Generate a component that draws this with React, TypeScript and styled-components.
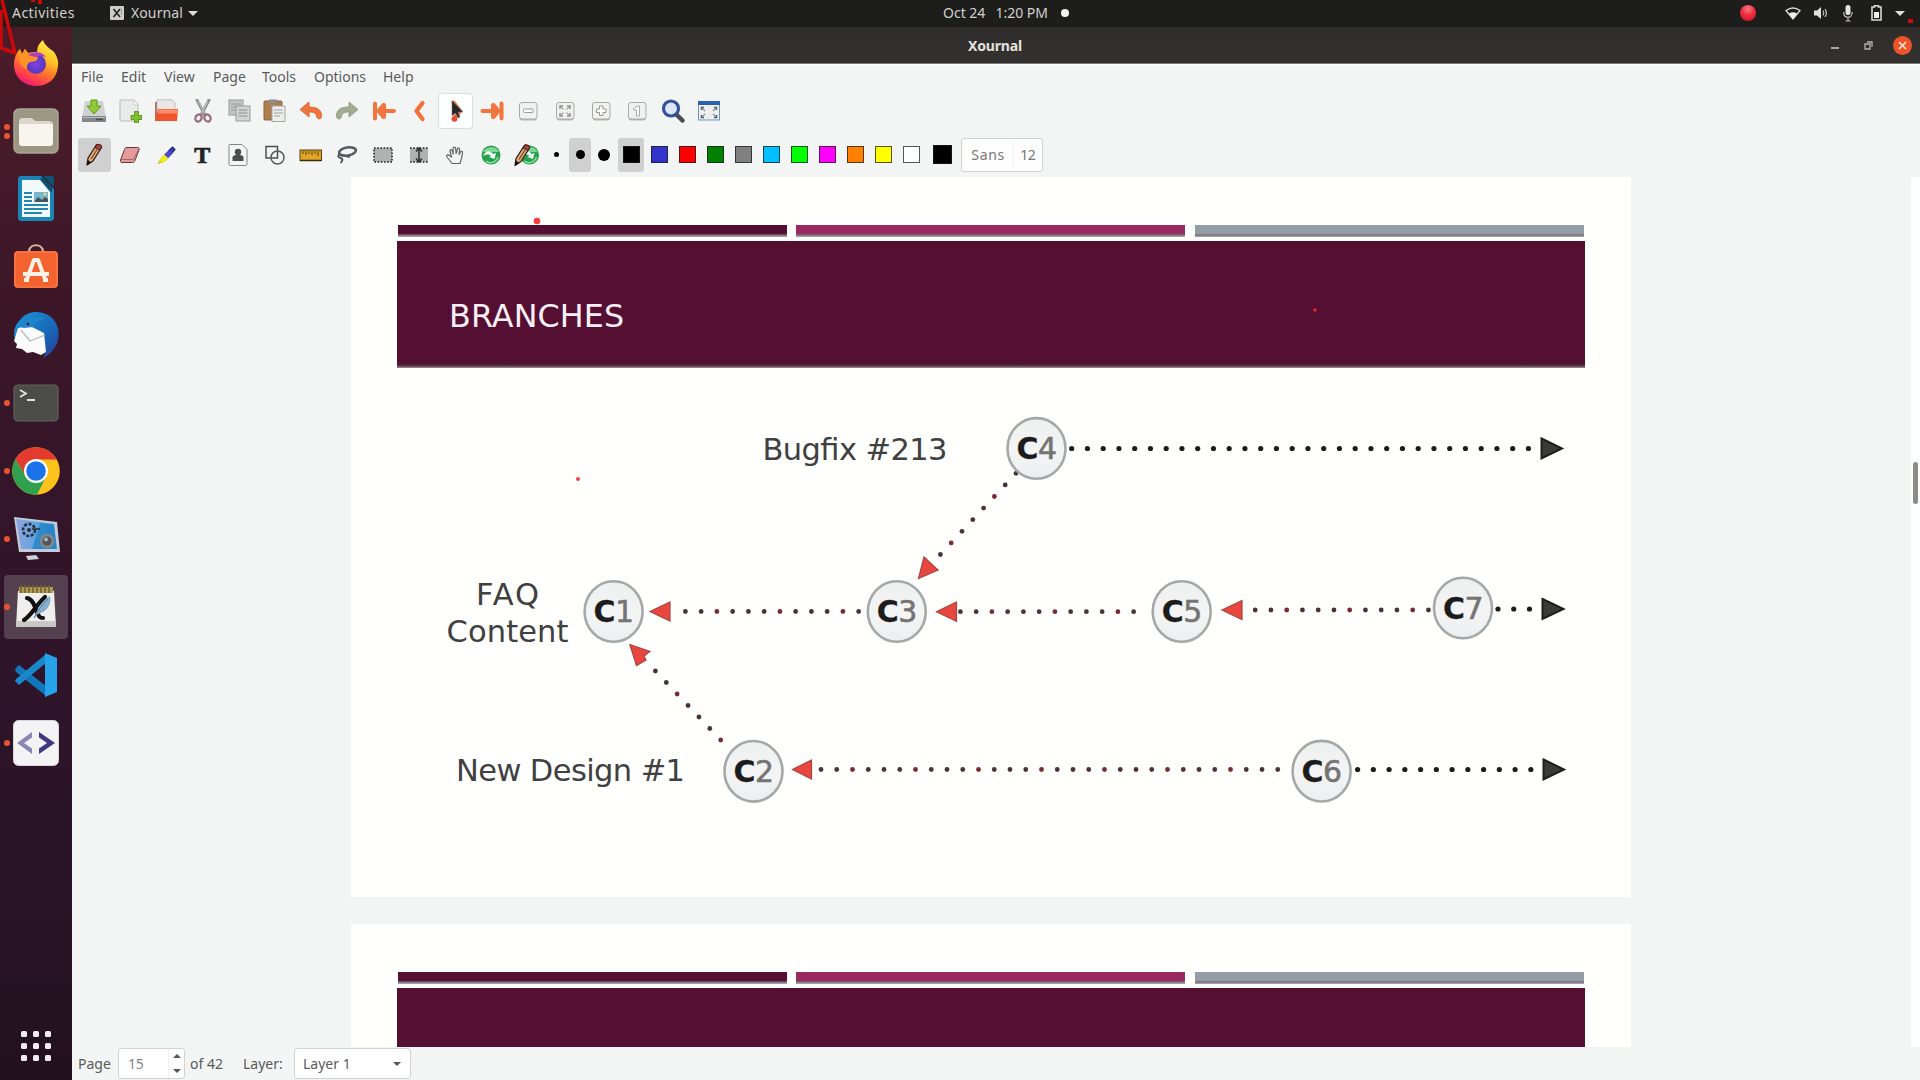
import React from 'react';
import styled, { createGlobalStyle, css } from 'styled-components';

const UI_FONT = '"Noto Sans", "Open Sans", sans-serif';
const SLIDE_FONT = '"DejaVu Sans", sans-serif';

const GlobalStyle = createGlobalStyle`
  * { box-sizing: border-box; }
  body { margin: 0; background: #f3f5f5; font-family: ${UI_FONT}; overflow: hidden; }
  svg { display: block; flex: none; }
`;

const Desktop = styled.div`
  position: relative;
  width: 1920px;
  height: 1080px;
  display: flex;
  flex-direction: column;
  overflow: hidden;
`;

const TopBar = styled.header`
  height: 27px;
  flex: none;
  display: grid;
  grid-template-columns: 700px 1fr 700px;
  align-items: center;
  background: #1d1d1b;
  color: #d2d0cd;
  font-size: 14px;
  line-height: 24px;
  padding-bottom: 1px;
`;

const TopLeft = styled.div`
  display: flex;
  align-items: center;
  padding-left: 12px;
`;

const Activities = styled.span`
  width: 98px;
  letter-spacing: 0.45px;
`;

const AppName = styled.span`
  margin-left: 7px;
  width: 57px;
  white-space: nowrap;
  letter-spacing: 0.1px;
`;

const CaretDown = styled.i<{ $size?: number; $color?: string }>`
  width: 0;
  height: 0;
  border: ${p => p.$size ?? 5}px solid transparent;
  border-top-color: ${p => p.$color ?? '#deddda'};
  border-bottom: 0;
`;

const CaretUp = styled(CaretDown)`
  border: 4px solid transparent;
  border-bottom-color: #555;
  border-top: 0;
`;

const Clock = styled.div`
  display: flex;
  align-items: center;
  padding-left: 243px;
  gap: 10px;
  white-space: nowrap;
  letter-spacing: 0;
`;

const NoticeDot = styled.i`
  width: 8px;
  height: 8px;
  border-radius: 50%;
  background: #f4f4f4;
  margin-left: 3px;
`;

const Tray = styled.div`
  display: flex;
  align-items: center;
  justify-content: flex-end;
  padding-right: 15px;
`;

const RecordLight = styled.i`
  width: 16px;
  height: 16px;
  border-radius: 50%;
  background: radial-gradient(circle at 50% 25%, #ff7a83, #ee2c40 45%, #c9122c);
  margin-right: 29px;
`;

const TraySlot = styled.div<{ $w: number }>`
  width: ${p => p.$w}px;
  display: flex;
`;

const Body = styled.div`
  flex: 1;
  display: flex;
  min-height: 0;
`;

const Dock = styled.nav`
  width: 72px;
  flex: none;
  display: flex;
  flex-direction: column;
  padding-top: 2px;
  background: linear-gradient(#4c1c2a 0, #451a29 12%, #3a1628 30%, #2f142a 60%, #2a1327 80%, #22121d 100%);
`;

const DockItem = styled.div<{ $active?: boolean }>`
  height: 64px;
  width: 64px;
  margin: 2px 4px;
  border-radius: 4px;
  display: grid;
  place-items: center;
  position: relative;
  ${p => p.$active && css`background: #54404f;`}
`;

const RunDots = styled.div`
  position: absolute;
  left: 0;
  top: 0;
  height: 100%;
  display: flex;
  flex-direction: column;
  justify-content: center;
  gap: 3px;
`;

const RunDot = styled.i`
  width: 6px;
  height: 6px;
  border-radius: 50%;
  background: #e95430;
`;

const AppGrid = styled.div`
  margin: auto 0 19px 21px;
  display: grid;
  grid-template-columns: repeat(3, 6px);
  grid-auto-rows: 6px;
  gap: 6px;
`;

const GridDot = styled.i`
  background: #f4eef4;
  border-radius: 1.5px;
`;

const Window = styled.main`
  flex: 1;
  min-width: 0;
  display: flex;
  flex-direction: column;
  background: #f3f5f5;
`;

const TitleBar = styled.div`
  height: 37px;
  flex: none;
  display: grid;
  grid-template-columns: 1fr auto 1fr;
  align-items: center;
  padding-right: 2px;
  background: linear-gradient(#2e2d2c, #32312f);
  border-bottom: 1px solid #7c7b7a;
  color: #e4e2df;
  font-size: 14px;
  font-weight: 700;
  letter-spacing: -0.15px;
`;

const WindowButtons = styled.div`
  grid-column: 3;
  display: flex;
  justify-content: flex-end;
  align-items: center;
  padding-right: 6px;
`;

const MinimizeMark = styled.i`
  width: 8px;
  height: 2px;
  background: #aaa8a6;
  margin: 5px 25px 0 0;
`;

const CloseButton = styled.div`
  width: 19px;
  height: 19px;
  border-radius: 50%;
  background: #ec5428;
  display: grid;
  place-items: center;
  margin-left: 20px;
`;

const MenuBar = styled.div`
  height: 26px;
  flex: none;
  display: flex;
  align-items: center;
  padding: 0 0 2px 9px;
  color: #5a5a5a;
  font-size: 14px;
  border-top: 2px solid #fdfdfd;
  border-bottom: 1px solid #f1f1ee;
`;

const MenuItem = styled.span<{ $w: number }>`
  width: ${p => p.$w}px;
  letter-spacing: 0;
`;

const ToolRow = styled.div<{ $h: number; $pitch: number }>`
  height: ${p => p.$h}px;
  flex: none;
  display: flex;
  align-items: center;
  padding-left: 4px;
  --pitch: ${p => p.$pitch}px;
`;

const ToolCell = styled.div`
  width: var(--pitch);
  flex: none;
  display: flex;
  justify-content: center;
`;

const ToolButton = styled.div<{ $state?: 'on' | 'hover'; $w?: number }>`
  width: ${p => p.$w ?? 33}px;
  height: 34px;
  flex: none;
  border-radius: 3px;
  display: grid;
  place-items: center;
  ${p => p.$state === 'on' && css`background: #d0d0d0;`}
  ${p => p.$state === 'hover' && css`background: #fff; box-shadow: 0 0 1px 1px #dcdcdc;`}
`;

const WidthCell = styled.div<{ $w: number }>`
  width: ${p => p.$w}px;
  flex: none;
  display: flex;
  justify-content: center;
`;

const SwatchStrip = styled.div`
  display: flex;
  align-items: center;
  padding-left: 1.4px;
`;

const PenDot = styled.i<{ $d: number }>`
  width: ${p => p.$d}px;
  height: ${p => p.$d}px;
  border-radius: 50%;
  background: #000;
`;

const Swatch = styled.i<{ $color: string; $size?: number }>`
  width: ${p => p.$size ?? 17}px;
  height: ${p => p.$size ?? 17}px;
  background: ${p => p.$color};
  border: 1.5px solid rgba(30, 30, 30, 0.75);
`;

const FontButton = styled.div`
  margin-left: 1px;
  width: 82px;
  height: 34px;
  border: 1px solid #d3d3d3;
  border-radius: 3px;
  background: #fdfdfd;
  display: flex;
  align-items: center;
  color: #777;
  font-size: 14px;
`;

const FontName = styled.span`
  width: 52px;
  height: 28px;
  line-height: 28px;
  padding-left: 9px;
  letter-spacing: 0.7px;
  border-right: 1px solid #f1f1ef;
`;

const FontSize = styled.span`
  padding-left: 6px;
  letter-spacing: -0.5px;
`;

const Workspace = styled.div`
  flex: 1;
  min-height: 0;
  display: flex;
  overflow: hidden;
`;

const Pages = styled.div`
  flex: 1;
  display: flex;
  flex-direction: column;
  gap: 27px;
  padding-left: 279px;
  overflow: hidden;
`;

const SlidePage = styled.section`
  width: 1280px;
  height: 720px;
  flex: none;
  background: #fffffe;
  padding: 48px 47px 0;
`;

const Stripes = styled.div`
  display: grid;
  grid-template-columns: repeat(3, 389px);
  justify-content: space-between;
  margin: 0 0 4px -0.5px;
`;

const Stripe = styled.div<{ $color: string }>`
  height: 12px;
  background: linear-gradient(${p => p.$color} 70%, #777077 84%, #b5afb3);
`;

const Banner = styled.div`
  margin: 0 -0.5px 0 -1px;
  height: 127px;
  background: linear-gradient(#540f32 93%, #4b1531 97%, #6b5461 99%, #a69aa2);
  color: #fbeff6;
  font: 31.8px/40px ${SLIDE_FONT};
  letter-spacing: 0.1px;
  padding: 55px 0 0 52px;
`;

const ScrollTrack = styled.div`
  width: 9px;
  background: #fff;
  padding: 285px 0 0 2px;
`;

const ScrollThumb = styled.div`
  width: 4.5px;
  height: 42px;
  border-radius: 3px;
  background: #8b8b89;
`;

const StatusBar = styled.footer`
  height: 33px;
  flex: none;
  display: flex;
  align-items: center;
  padding: 0 0 0 6px;
  color: #5a5a5a;
  font-size: 14px;
`;

const StatusLabel = styled.span<{ $w: number }>`
  width: ${p => p.$w}px;
  white-space: nowrap;
  letter-spacing: 0;
`;

const PageTotal = styled(StatusLabel)`
  padding-left: 5px;
`;

const Field = styled.div<{ $w: number }>`
  width: ${p => p.$w}px;
  height: 31px;
  border: 1px solid #d2d2d2;
  border-radius: 3px;
  background: #fff;
  display: flex;
  align-items: center;
`;

const PageNumber = styled.span`
  flex: 1;
  padding-left: 9px;
  color: #858585;
  letter-spacing: -0.3px;
`;

const Stepper = styled.div`
  width: 16px;
  height: 29px;
  border-left: 1px solid #f0f0f0;
  display: flex;
  flex-direction: column;
  align-items: center;
  justify-content: space-between;
  padding: 5px 0 5px;
`;

const LayerName = styled.span`
  width: 98px;
  padding-left: 8px;
`;

const InkOverlay = styled.svg`
  position: absolute;
  left: 0;
  top: 0;
  pointer-events: none;
`;

/* ---------- dock icons, 48 x 48 ---------- */

const dockSvg = (children: React.ReactNode) => (
  <svg width="48" height="48" viewBox="0 0 48 48">{children}</svg>
);

const Firefox = () => dockSvg(
  <>
    <defs>
      <linearGradient id="ff" x1="0.8" y1="0" x2="0.3" y2="1">
        <stop offset="0" stopColor="#fff44f" /><stop offset=".35" stopColor="#ffc327" />
        <stop offset=".6" stopColor="#ff7a2a" /><stop offset=".85" stopColor="#ff3750" /><stop offset="1" stopColor="#e31587" />
      </linearGradient>
      <radialGradient id="ffb"><stop offset="0" stopColor="#7a45e0" /><stop offset="1" stopColor="#5a35c0" /></radialGradient>
    </defs>
    <path d="M2 26C2 19 4 14 8 10l2 5 3-5 3 4c4-1 6-1 9-1 0-5 2-9 6-12 1 4 4 6 7 9l3 2c3 3 6 9 5 15-1 13-10 20-22 20S2 38 2 26z" fill="url(#ff)" />
    <circle cx="24" cy="25" r="10" fill="url(#ffb)" />
    <path d="M8 11l2 4 3-5 3 4 7 1 3 4-2 3-6 1c-3 2-3 3-3 7-5-1-8-7-8-11z" fill="#ff9328" />
    <path d="M16 16c5-4 14-4 18 2l-6-1-5 1z" fill="#b13cc4" />
  </>
);

const Files = () => dockSvg(
  <>
    <rect x="2" y="2" width="44" height="44" rx="5" fill="#9c9785" stroke="#aaa594" strokeWidth="1.5" />
    <path d="M7 15c0-3 1-4 4-4h8c2 0 3 3 5 3h13c2 0 4 1 4 4v17c0 3-1 4-4 4H11c-3 0-4-1-4-4z" fill="#dcd7cb" />
    <path d="M7 17h34v18c0 3-1 4-4 4H11c-3 0-4-1-4-4z" fill="#f8f5ef" />
  </>
);

const Writer = () => dockSvg(
  <>
    <path d="M9 1h20l13 13v28c0 3-1 4-4 4H10c-3 0-4-1-4-4V5c0-3 1-4 3-4z" fill="#1a85b6" />
    <path d="M31 1h8c2 0 3 1 3 3v8z" fill="#0d5578" />
    <path d="M10 5h18l10 12v25H10z" fill="#f3f9fb" />
    <path d="M28 4l12 14V12L31 2z" fill="#124c68" />
    <path d="M12 18h8M12 22h8M12 26h8M12 30h24M12 34h24M12 38h18" stroke="#2288ad" strokeWidth="2" />
    <rect x="22" y="17" width="14" height="10" fill="#77b7ce" />
    <path d="M22 27l4-5 4 3 3-3 3 2v3z" fill="#45535c" /><circle cx="33" cy="19" r="1.5" fill="#f0d36c" />
  </>
);

const Software = () => dockSvg(
  <>
    <path d="M17 9c0-9 14-9 14 0" fill="none" stroke="#ccb697" strokeWidth="2.2" />
    <rect x="2" y="8" width="44" height="37" rx="4" fill="#f4622f" />
    <rect x="3" y="9" width="42" height="35" rx="3" fill="none" stroke="#fa8150" />
    <path d="M15 36l7-19h4l7 19M11 31h26M12 37h5M31 37h5" fill="none" stroke="#fdf0e6" strokeWidth="4" strokeLinejoin="round" />
  </>
);

const Thunderbird = () => dockSvg(
  <>
    <defs>
      <linearGradient id="tb" x1="0" y1="0" x2="1" y2="1"><stop offset="0" stopColor="#1d96d8" /><stop offset=".6" stopColor="#1867b8" /><stop offset="1" stopColor="#2a3b96" /></linearGradient>
    </defs>
    <path d="M9 8C16-2 34-1 42 9c9 12 5 30-11 38 2-4 4-7 2-11L6 33C-1 25 2 14 9 8z" fill="url(#tb)" />
    <path d="M6 17l12-2 14 7 2 19-5 3-8-3-6 1-5-4-6-1 1-4-3-3z" fill="#fbfbfc" />
    <path d="M9 19l9 11 15-6" fill="none" stroke="#b3b9bf" strokeWidth="1.2" />
    <path d="M9 16c4-9 15-12 25-8-6 0-11 4-13 8l-9 1z" fill="#2186c9" />
    <circle cx="16" cy="13" r="1.3" fill="#123" />
  </>
);

const Terminal = () => dockSvg(
  <>
    <rect x="2" y="6" width="44" height="36" rx="4" fill="#4b4b48" stroke="#62625f" strokeWidth="1.2" />
    <path d="M8 11l6 3.5L8 18M15 21h8" fill="none" stroke="#e2e2df" strokeWidth="1.8" />
  </>
);

const Chrome = () => dockSvg(
  <>
    <circle cx="24" cy="24" r="23.800" fill="#fcc21b" />
    <path d="M14 30L3.400 12A24 24 0 0 1 45 12.5H24z" fill="#e33b2e" />
    <path d="M14 30L3.400 12A24 24 0 0 0 25 47.800L34 30z" fill="#2ea04e" />
    <circle cx="24" cy="24" r="12" fill="#fff" /><circle cx="24" cy="24" r="9.8" fill="#1a73e8" />
  </>
);

const Recorder = () => dockSvg(
  <>
    <defs><linearGradient id="rc" x1="0" y1="0" x2="1" y2="0"><stop offset="0" stopColor="#8ea5dd" /><stop offset=".5" stopColor="#5da5e0" /><stop offset="1" stopColor="#2d8ad0" /></linearGradient></defs>
    <path d="M2 2l43 5 3 30H7z" fill="#c3cbd8" />
    <path d="M4 4l38 5 3 25H9z" fill="url(#rc)" />
    <path d="M28 8l14 2 2 24H20z" fill="#1f7fc5" opacity=".7" />
    <circle cx="17" cy="15" r="6" fill="none" stroke="#27303a" strokeWidth="2.6" strokeDasharray="3 1.5" />
    <circle cx="17" cy="15" r="2" fill="#27303a" /><path d="M20 14h8" stroke="#27303a" strokeWidth="1.600" />
    <circle cx="35" cy="26" r="7.5" fill="#7e868e" /><circle cx="35" cy="26" r="4.5" fill="#4f565e" /><circle cx="34" cy="24.500" r="2" fill="#aab4bd" />
    <path d="M14 41l10-1 3 4-11 1z" fill="#cfd3d5" />
  </>
);

const Xournal = () => dockSvg(
  <>
    <path d="M6 8h36l2 36H4z" fill="#efeeec" />
    <path d="M5 38h38.500l.5 6H4z" fill="#c9c8c6" />
    <path d="M7 4h34v6H7z" fill="#af9850" />
    <path d="M9 2v8M13 2v8M17 2v8M21 2v8M25 2v8M29 2v8M33 2v8M37 2v8" stroke="#6f5f2d" strokeWidth="1.5" />
    <path d="M15 15c6 1 8 9 10 14s3 6 6 6M33 14C24 22 20 32 12 37" fill="none" stroke="#111" strokeWidth="4.2" strokeLinecap="round" />
    <path d="M38 13c2 8-3 16-12 18l-4 4c3-9 8-17 16-22z" fill="#86aecb" /><path d="M22 35c4-8 8-14 14-19" stroke="#4b7fa6" fill="none" />
  </>
);

const VSCode = () => dockSvg(
  <>
    <path d="M3 18l4-4 27 21v10L4 21z" fill="#1177bb" />
    <path d="M3 30l4 4 27-22V3L4 28z" fill="#1b88cc" />
    <path d="M33 2l12 5v34l-12 5V2z" fill="#27a3ec" />
  </>
);

const CodeApp = () => dockSvg(
  <>
    <rect x="1.500" y="1.500" width="45" height="45" rx="5" fill="#f3f3f5" stroke="#d6d6da" />
    <path d="M20 13v5.500L12 24l8 5.500V35L5 24z" fill="#8b87b5" />
    <path d="M27 13v5.500l8 5.500-8 5.500V35l16-11z" fill="#403b80" />
  </>
);

/* ---------- toolbar icons, 24 x 24 ---------- */

const tool = (children: React.ReactNode) => (
  <svg width="24" height="24" viewBox="0 0 24 24">{children}</svg>
);

const SaveIcon = () => tool(<>
  <path d="M3 2h18l3 16H0z" fill="#cfd1d2" /><path d="M0 17h24v6H0z" fill="#84888a" /><path d="M1 18h22v1H1z" fill="#b8bbbd" />
  <path d="M14 20.500h7" stroke="#444" strokeWidth="1.500" />
  <path d="M9 1h6v6h4l-7 8-7-8h4z" fill="#92ca37" stroke="#5c9a15" />
</>);
const NewIcon = () => tool(<>
  <path d="M2 1h14l4 5v16H2z" fill="#e9eaea" stroke="#b9baba" /><path d="M16 1l4 5h-4z" fill="#fff" stroke="#bbb" strokeWidth=".6" />
  <path d="M16.500 12.500h4v4h3.500v4h-3.500v3.500h-4v-3.500H13v-4h3.500z" fill="#7fbf2c" stroke="#4d8b12" strokeWidth=".8" />
</>);
const OpenIcon = () => tool(<>
  <path d="M1 3h8l2 2h10v17H1z" fill="#b76c53" /><path d="M3 0.800h15l3 3v10H3z" fill="#e9e7e4" stroke="#b4b2af" strokeWidth=".8" />
  <path d="M4 10h20l-1 12H1z" fill="#f0542b" /><path d="M4.500 10.500h19l-.4 4H4z" fill="#ff8f68" />
</>);
const CutIcon = () => tool(<>
  <path d="M6 1l8 15M18 1l-8 15" stroke="#8d8f90" strokeWidth="3" strokeLinecap="round" />
  <path d="M7 2l7 13M17 2l-7 13" stroke="#c6c8c8" strokeWidth="1" />
  <ellipse cx="7.500" cy="19" rx="3" ry="3.700" fill="none" stroke="#9a6d7b" strokeWidth="2.300" transform="rotate(25 7.5 19)" />
  <ellipse cx="16.500" cy="19" rx="3" ry="3.700" fill="none" stroke="#9a6d7b" strokeWidth="2.300" transform="rotate(-25 16.5 19)" />
</>);
const CopyIcon = () => tool(<>
  <rect x="2" y="1" width="14" height="15" fill="#c2c5c4" stroke="#999c9b" /><path d="M4 5h10M4 8h10M4 11h10" stroke="#9b9e9d" />
  <rect x="9" y="7" width="14" height="15" fill="#d3d5d4" stroke="#999c9b" /><path d="M11.500 11h9M11.500 14h9M11.500 17h9" stroke="#a3a6a5" strokeWidth="1.300" />
</>);
const PasteIcon = () => tool(<>
  <rect x="1" y="2" width="18" height="19" rx="1" fill="#ad7f50" stroke="#8b6238" /><rect x="6" y=".500" width="8" height="4" fill="#8d8d8a" />
  <path d="M9 7h13v15.500H9z" fill="#eeeeed" stroke="#a6a6a4" /><path d="M11 11h9M11 14h9M11 17h6" stroke="#a2a2a0" />
</>);
const UndoIcon = () => tool(<path d="M10 3v5c7 0 13 2 12.500 9.500 0 3-4.500 3.500-5 0-.4-3.500-3-4.500-7.500-4.500v5L1 10.500z" fill="#f1733d" stroke="#d85a26" strokeWidth=".8" strokeLinejoin="round" />);
const RedoIcon = () => tool(<path d="M14 3v5C7 8 1 10 1.500 17.500c0 3 4.500 3.500 5 0 .4-3.500 3-4.500 7.500-4.500v5l9-7.500z" fill="#a2ac90" stroke="#8b967a" strokeWidth=".8" strokeLinejoin="round" />);
const FirstIcon = () => tool(<path d="M3 4.500v15M22 12H8M12 6v12M11.500 6l-5 6 5 6" fill="none" stroke="#f27540" strokeWidth="4" strokeLinecap="round" strokeLinejoin="round" />);
const LastIcon = () => tool(<path d="M21.500 4.500v15M2.500 12h13M13 6v12M13.500 6l5 6-5 6" fill="none" stroke="#f27540" strokeWidth="4" strokeLinecap="round" strokeLinejoin="round" />);
const PrevIcon = () => tool(<path d="M14.500 4L8.500 12l6 8" fill="none" stroke="#f1713a" strokeWidth="4.300" strokeLinecap="round" strokeLinejoin="round" />);
const NextIcon = () => tool(<>
  <path d="M9.500 3.500L16 12l-6.500 8" fill="none" stroke="#f0703a" strokeWidth="4" strokeLinecap="round" />
  <circle cx="10.500" cy="20" r="2.800" fill="#e8482f" />
  <path d="M8 1.500V17l3.500-3 2.500 5 2-1-2-5h5z" fill="#262626" stroke="#8a7a76" strokeWidth=".6" />
</>);
const KeyCap = ({ children }: { children: React.ReactNode }) => tool(<>
  <rect x="3.500" y="4" width="17.500" height="17.500" rx="3" fill="#b4b4b4" /><rect x="3.500" y="3.500" width="17.500" height="16.500" rx="2.500" fill="#f1f1f0" stroke="#a9a9a8" />
  {children}
</>);
const ZoomOut = () => <KeyCap><rect x="7.500" y="10" width="9.500" height="3.500" rx="1" fill="#fff" stroke="#9a9a9a" /></KeyCap>;
const ZoomFit = () => <KeyCap><path d="M7 10V7h3M14 7h3v3M17 14v3h-3M10 17H7v-3" fill="none" stroke="#8b8b8b" strokeWidth="1.400" /><path d="M8 8l2.500 2.500M16 8l-2.500 2.500M16 16l-2.500-2.500M8 16l2.500-2.500" fill="none" stroke="#a8a8a8" strokeWidth="1.200" /></KeyCap>;
const ZoomIn = () => <KeyCap><path d="M10.500 7h3.500v3h3v3.500h-3v3h-3.500v-3h-3V10h3z" fill="#fff" stroke="#969696" strokeLinejoin="round" /></KeyCap>;
const ZoomOne = () => <KeyCap><path d="M8.500 9.500L12 7h2.500v10h-3v-6h-3z" fill="#fff" stroke="#aaa" /></KeyCap>;
const SearchIcon = () => tool(<>
  <path d="M15 15l6.500 6.500" stroke="#4c4c50" strokeWidth="4.500" strokeLinecap="round" />
  <circle cx="10" cy="9.500" r="7.500" fill="#dde6f4" stroke="#33529b" strokeWidth="3.200" />
</>);
const FullIcon = () => tool(<>
  <rect x="1.500" y="2.500" width="21" height="18.500" fill="#eef0f0" stroke="#6c93c5" /><rect x="1" y="2" width="22" height="4" fill="#2b62b5" />
  <path d="M4.500 11V8.500H7M17 8.500h2.500V11M19.500 16v2.500H17M7 18.500H4.500V16" fill="none" stroke="#5b5e60" strokeWidth="1.500" />
  <path d="M5 9l3 3M19 9l-3 3M19 18l-3-3M5 18l3-3" stroke="#8a8d8f" strokeWidth="1.100" />
</>);

const PencilShape = () => (<>
  <path d="M5 22l1-7L14 2.500c1.500-2 6-.5 5.500 2L11 18z" fill="#dfa877" stroke="#2b211b" strokeWidth="1.300" strokeLinejoin="round" />
  <path d="M14 2.500c1.500-2 6-.5 5.500 2L18 7l-5-2.500z" fill="#b23c38" stroke="#3a2420" /><path d="M9 16l7-11" stroke="#7a4a28" strokeWidth="1.200" /><path d="M5 22l.8-5 3.400 2.500z" fill="#111" />
</>);
const PencilIcon = () => tool(<PencilShape />);
const EraserIcon = () => tool(<>
  <path d="M9 4.500h10.500c1.500 0 2 1 1.500 2.500L17 17.500c-.6 1.400-1 2-2.500 2H4c-1.500 0-2-1-1.500-2.500L6.500 6.500c.6-1.500 1-2 2.500-2z" fill="#e79a9c" stroke="#5a3b3c" />
  <path d="M2.500 16.500h12.800L20.800 6" fill="none" stroke="#a86668" />
</>);
const HighlighterIcon = () => tool(<>
  <path d="M14.500 8l4-4 2.500 2.500-4 4.500z" fill="#3b3fc9" stroke="#252a7a" strokeWidth="1.200" /><path d="M10 11.500l5-4.500 3.500 3.500-4.500 5z" fill="#4a49d0" />
  <path d="M5 18l5-6.500 4 4L8.500 20z" fill="#f3ee1b" stroke="#d6d000" strokeWidth=".6" /><path d="M4 20.500l3-2" stroke="#b5b000" strokeWidth="1.200" />
</>);
const TextTool = styled.span`
  font: 700 24px/24px "Liberation Serif", serif;
  color: #222;
  -webkit-text-stroke: 0.7px #222;
`;
const ImageIcon = () => tool(<>
  <path d="M3.500 1.500h12.500l5 5v14.500c0 1-.5 1.500-1.500 1.500h-15c-1 0-1.500-.5-1.500-1.500V3c0-1 .3-1.500.5-1.500z" fill="#f5f5f5" stroke="#858585" /><circle cx="12" cy="9" r="3.200" fill="#4d4d4d" />
  <path d="M6.500 18v-3.500c0-2 2-2.500 5.500-2.500s5.500.5 5.500 2.500V18z" fill="#4d4d4d" />
</>);
const ShapesIcon = () => tool(<>
  <rect x="3" y="3.500" width="11.500" height="11.500" fill="none" stroke="#4d4d4d" strokeWidth="1.500" /><circle cx="14.500" cy="14.500" r="6.500" fill="none" stroke="#5d5d5d" strokeWidth="1.500" />
</>);
const RulerIcon = () => tool(<>
  <rect x="1" y="7" width="21.500" height="10.500" fill="#dfa528" stroke="#584213" strokeWidth="1" /><path d="M1 17.500h21.500" stroke="#3a2b0c" strokeWidth="1.500" />
  <path d="M4 8v3M7 8v4M10 8v3M13 8v4M16 8v3M19 8v5" stroke="#5b430e" />
</>);
const LassoIcon = () => tool(<>
  <ellipse cx="12.500" cy="8.500" rx="8.500" ry="4" fill="none" stroke="#565a5a" strokeWidth="2.600" transform="rotate(-10 12.5 8.5)" />
  <path d="M5.500 11c-3 1-3 3 0 4s2 3 0 5M6 12.500c3-1 6 2 9 1" fill="none" stroke="#565a5a" strokeWidth="2" />
</>);
const RegionIcon = () => tool(<rect x="3" y="5" width="18" height="14" fill="#b1b1b1" stroke="#222" strokeWidth="1.600" strokeDasharray="1.600 1.600" />);
const SpaceIcon = () => tool(<>
  <rect x="3" y="5" width="18" height="14" fill="#b1b1b1" /><path d="M3 5h18M3 19h18" stroke="#222" strokeWidth="1.600" strokeDasharray="1.600 1.600" />
  <path d="M12 6v12M9 8.500L12 5l3 3.500M9 15.500l3 3.500 3-3.500" fill="none" stroke="#333" strokeWidth="1.600" />
</>);
const HandIcon = () => tool(<path d="M9 20.500L4 14c-1.500-2 1-3 2.300-1.500L8.500 14 7 8c-.3-1.800 1.800-2 2.200-.3l1 3.300V5.500c0-1.800 2.300-1.800 2.400 0l.5 5 1.300-4.500c.4-1.600 2.400-1.200 2.200.4L16 11.500l1.500-2.500c.8-1.400 2.300-.6 2 .8l-1 5.500-1.500 5.200z" fill="#f4f4f3" stroke="#666" strokeWidth="1.200" strokeLinejoin="round" />);
const GreenOrb = ({ x = 0 }: { x?: number }) => (<g transform={`translate(${x} 0)`}>
  <circle cx="12" cy="12" r="9.500" fill="#27a04c" /><path d="M4 9C6 3.500 17 2 20 9z" fill="#7fd695" />
  <path d="M4 13c2-6 8-6 10-2l3-1-1.500 6L10 14l2-1c-2-2-4-2-8 0z" fill="#f0fbf2" /><path d="M7 18c3 3 10 2 12-4" fill="none" stroke="#8fe0a4" strokeWidth="1.500" />
</g>);
const GreenIcon = () => tool(<GreenOrb />);
const GreenPenIcon = () => (
  <svg width="26" height="24" viewBox="-2 0 26 24"><GreenOrb x={1.5} /><g transform="translate(-6 .5)"><PencilShape /></g></svg>
);

const ROW_ONE = [SaveIcon, NewIcon, OpenIcon, CutIcon, CopyIcon, PasteIcon, UndoIcon, RedoIcon, FirstIcon, PrevIcon, NextIcon, LastIcon, ZoomOut, ZoomFit, ZoomIn, ZoomOne, SearchIcon, FullIcon];
const ROW_TWO = [PencilIcon, EraserIcon, HighlighterIcon, () => <TextTool>T</TextTool>, ImageIcon, ShapesIcon, RulerIcon, LassoIcon, RegionIcon, SpaceIcon, HandIcon, GreenIcon, GreenPenIcon];
const COLORS = ['#000000', '#3333cc', '#ff0000', '#008000', '#808080', '#00c0ff', '#00ff00', '#ff00ff', '#ff8000', '#ffff00', '#ffffff'];
const MENUS: [string, number][] = [['File', 40], ['Edit', 43], ['View', 49], ['Page', 49], ['Tools', 52], ['Options', 69], ['Help', 40]];
const APPS: { icon: React.FC; running?: number; active?: boolean }[] = [
  { icon: Firefox }, { icon: Files, running: 2 }, { icon: Writer }, { icon: Software }, { icon: Thunderbird },
  { icon: Terminal, running: 1 }, { icon: Chrome, running: 1 }, { icon: Recorder, running: 1 },
  { icon: Xournal, running: 1, active: true }, { icon: VSCode }, { icon: CodeApp, running: 1 },
];

/* ---------- branch diagram ---------- */

const NODES: [string, number, number][] = [
  ['1', 613.6, 611.5], ['2', 753.5, 771.3], ['3', 896.8, 611.5], ['4', 1036.5, 448.4],
  ['5', 1181.7, 611.5], ['6', 1321.6, 771.2], ['7', 1463, 608],
];

type Run = { x: number; y: number; n: number; dx?: number; dy?: number; red?: boolean };
const RUNS: Run[] = [
  { x: 1071.7, y: 448.5, n: 30 },
  { x: 1498, y: 609, n: 3 },
  { x: 1357.6, y: 769.5, n: 12 },
  { x: 1255.2, y: 610, n: 12, red: true },
  { x: 960.4, y: 611.7, n: 12, red: true },
  { x: 685.4, y: 611.5, n: 12, red: true },
  { x: 821, y: 769.5, n: 30, red: true },
  { x: 655.4, y: 671, n: 7, dx: 10.88, dy: 11.5, red: true },
  { x: 1016, y: 473.3, n: 8, dx: -10.8, dy: 11.6, red: true },
];

const BLACK_HEADS = ['1541.500,438.500 1562,448.500 1541.500,458.500', '1542.500,599 1563.500,609 1542.500,619', '1543.500,759.500 1564,769.500 1543.500,779.500'];
const RED_HEADS = [
  '1242,600.500 1222,610 1242,619.500', '956.500,602 936.500,611.700 956.500,621.200', '670,602 650,611.500 670,621',
  '811.500,760 792.500,769.500 811.500,779', '629.800,644.500 650,651.500 644,656 646,660 636.500,665.500', '918.500,578.500 924,557 938,570',
];

const Diagram = () => (
  <svg width="1186" height="440" viewBox="398 368 1186 440" fontFamily={SLIDE_FONT}>
    <defs>
      <linearGradient id="node" x1="0" y1="0" x2="0" y2="1"><stop offset="0" stopColor="#eeefef" /><stop offset=".55" stopColor="#f4f4f4" /><stop offset="1" stopColor="#eceeef" /></linearGradient>
    </defs>
    {RUNS.map((r, i) => Array.from({ length: r.n }, (_, k) => (
      <circle key={`${i}-${k}`} cx={r.x + k * (r.dx ?? 15.75)} cy={r.y + k * (r.dy ?? 0)} r={r.red ? 2.4 : 2.6}
        fill={r.red ? (k % 4 === 2 ? '#7a2a30' : '#4a3338') : '#1c1c1c'} />
    )))}
    {BLACK_HEADS.map(p => <polygon key={p} points={p} fill="#3a3a3a" stroke="#1d1d1d" strokeWidth="2" />)}
    {RED_HEADS.map(p => <polygon key={p} points={p} fill="#ea4640" stroke="#a8443f" strokeWidth="1.200" />)}
    {NODES.map(([n, x, y]) => (
      <g key={n}>
        <ellipse cx={x} cy={y} rx="29" ry="30.300" fill="url(#node)" stroke="#a4a8a8" strokeWidth="2.600" />
        <text x={x - 20} y={y + 10.5} fontSize="30" fontWeight="700" fill="#1c1c1c" stroke="#1c1c1c" strokeWidth=".3" textLength="22" lengthAdjust="spacingAndGlyphs">C</text>
        <text x={x + 1.5} y={y + 10.5} fontSize="30" fill="#747474" stroke="#747474" strokeWidth=".6" textLength="19" lengthAdjust="spacingAndGlyphs">{n}</text>
      </g>
    ))}
    <g fill="#404040" fontSize="30.500">
      <text x="762.500" y="460" textLength="185">Bugfix #213</text>
      <text x="476" y="605" textLength="63">FAQ</text>
      <text x="446.500" y="641.700" textLength="122">Content</text>
      <text x="456" y="781" textLength="229">New Design #1</text>
    </g>
  </svg>
);

const SlideHeader = ({ title }: { title?: string }) => (
  <>
    <Stripes>
      <Stripe $color="#540f32" /><Stripe $color="#982a5f" /><Stripe $color="#939da5" />
    </Stripes>
    <Banner>{title}</Banner>
  </>
);

export default function App() {
  return (
    <>
      <GlobalStyle />
      <Desktop>
        <TopBar>
          <TopLeft>
            <Activities>Activities</Activities>
            <svg width="14" height="14" viewBox="0 0 14 14">
              <rect width="14" height="14" rx="1" fill="#cfcecb" /><path d="M3.500 3l6.500 8M10 3L3.500 11" stroke="#2a2a28" strokeWidth="1.800" /><path d="M11.500 3v6" stroke="#999" />
            </svg>
            <AppName>Xournal</AppName>
            <CaretDown />
          </TopLeft>
          <Clock><span>Oct 24</span><span>1:20 PM</span><NoticeDot /></Clock>
          <Tray>
            <RecordLight />
            <TraySlot $w={28}>
              <svg width="16" height="15" viewBox="0 0 16 15"><path d="M1 4.500Q8-.500 15 4.500L8 13z" fill="none" stroke="#deddda" strokeWidth="1.300" /><path d="M4 7.500q4-2.500 8 0L8 13z" fill="#f2f1ee" /></svg>
            </TraySlot>
            <TraySlot $w={30}>
              <svg width="16" height="14" viewBox="0 0 16 14"><path d="M1 4.500h3L8 1v12L4 9.500H1z" fill="#e2e0dd" /><path d="M10 4.500q1.500 2.500 0 5M12 3q2.800 4 0 8" fill="none" stroke="#bdbbb8" strokeWidth="1.300" /></svg>
            </TraySlot>
            <TraySlot $w={28}>
              <svg width="10" height="17" viewBox="0 0 10 17"><rect x="2.500" y="0" width="5" height="10" rx="2.500" fill="#e6e5e2" /><path d="M.700 7c0 7 8.600 7 8.600 0M5 12v4M2.500 16h5" fill="none" stroke="#c4c2bf" strokeWidth="1.200" /></svg>
            </TraySlot>
            <TraySlot $w={24}>
              <svg width="11" height="16" viewBox="0 0 11 16"><path d="M3.500 2V.800h4V2H10v13H1V2z" fill="none" stroke="#d8d7d4" strokeWidth="1.600" /><rect x="3" y="7" width="5" height="6" fill="#f0efec" /></svg>
            </TraySlot>
            <CaretDown />
          </Tray>
        </TopBar>
        <Body>
          <Dock>
            {APPS.map(({ icon: Icon, running = 0, active }, i) => (
              <DockItem key={i} $active={active}>
                <Icon />
                <RunDots>{Array.from({ length: running }, (_, k) => <RunDot key={k} />)}</RunDots>
              </DockItem>
            ))}
            <AppGrid>{Array.from({ length: 9 }, (_, i) => <GridDot key={i} />)}</AppGrid>
          </Dock>
          <Window>
            <TitleBar>
              <span />
              <span>Xournal</span>
              <WindowButtons>
                <MinimizeMark />
                <svg width="9" height="9" viewBox="0 0 9 9"><path d="M1 3h5v5H1zM3 1h5v5" fill="none" stroke="#b5b3b0" strokeWidth="1.300" /></svg>
                <CloseButton><svg width="9" height="9" viewBox="0 0 9 9"><path d="M1 1l7 7M8 1L1 8" stroke="#fde6dd" strokeWidth="1.600" /></svg></CloseButton>
              </WindowButtons>
            </TitleBar>
            <MenuBar>{MENUS.map(([name, w]) => <MenuItem key={name} $w={w}>{name}</MenuItem>)}</MenuBar>
            <ToolRow $h={42} $pitch={36.2}>
              {ROW_ONE.map((Icon, i) => (
                <ToolCell key={i}><ToolButton $state={Icon === NextIcon ? 'hover' : undefined}><Icon /></ToolButton></ToolCell>
              ))}
            </ToolRow>
            <ToolRow $h={45} $pitch={36.1}>
              {ROW_TWO.map((Icon, i) => (
                <ToolCell key={i}><ToolButton $state={i === 0 ? 'on' : undefined}><Icon /></ToolButton></ToolCell>
              ))}
              {[5, 9, 12].map(d => (
                <WidthCell key={d} $w={23.5}><ToolButton $w={22} $state={d === 9 ? 'on' : undefined}><PenDot $d={d} /></ToolButton></WidthCell>
              ))}
              <SwatchStrip>
                {COLORS.map((c, i) => (
                  <WidthCell key={c} $w={28.03}><ToolButton $w={26} $state={i === 0 ? 'on' : undefined}><Swatch $color={c} /></ToolButton></WidthCell>
                ))}
                <WidthCell $w={35}><Swatch $color="#000" $size={19} /></WidthCell>
              </SwatchStrip>
              <FontButton><FontName>Sans</FontName><FontSize>12</FontSize></FontButton>
            </ToolRow>
            <Workspace>
              <Pages>
                <SlidePage><SlideHeader title="BRANCHES" /><Diagram /></SlidePage>
                <SlidePage><SlideHeader /></SlidePage>
              </Pages>
              <ScrollTrack><ScrollThumb /></ScrollTrack>
            </Workspace>
            <StatusBar>
              <StatusLabel $w={40}>Page</StatusLabel>
              <Field $w={67}><PageNumber>15</PageNumber><Stepper><CaretUp /><CaretDown $size={4} $color="#555" /></Stepper></Field>
              <PageTotal $w={58}>of 42</PageTotal>
              <StatusLabel $w={51}>Layer:</StatusLabel>
              <Field $w={117}><LayerName>Layer 1</LayerName><CaretDown $size={4.5} $color="#555" /></Field>
            </StatusBar>
          </Window>
        </Body>
        <InkOverlay width="1920" height="1080" viewBox="0 0 1920 1080">
          <path d="M2 0L15 53L1 48V10" fill="none" stroke="#cc0808" strokeWidth="3.500" strokeLinejoin="round" />
          <path d="M31 0h4v2h-4zM38 0h4v4h-4z" fill="#cc0808" />
          <rect x="1908" y="19" width="5" height="4" fill="#cc0808" />
          <circle cx="537" cy="221" r="3.300" fill="#ff3b3b" />
          <circle cx="578" cy="479" r="2" fill="#ff3b3b" />
          <circle cx="1315" cy="310" r="1.800" fill="#ee2030" />
        </InkOverlay>
      </Desktop>
    </>
  );
}
